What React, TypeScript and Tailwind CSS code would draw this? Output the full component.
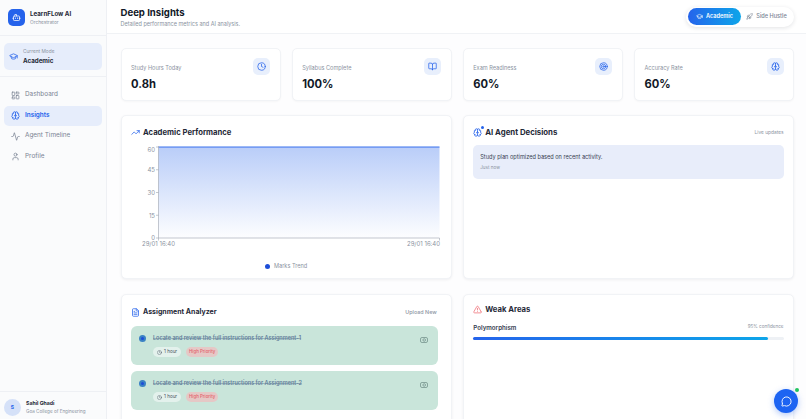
import React from 'react';
import {
  Activity, BookOpen, Bot, Brain, Clock, FileText, GraduationCap, LayoutDashboard, MessageCircle,
  Rocket, Target, TrendingUp, TriangleAlert, User,
} from 'lucide-react';

const stats = [
  { label: 'Study Hours Today', value: '0.8h', icon: Clock },
  { label: 'Syllabus Complete', value: '100%', icon: BookOpen },
  { label: 'Exam Readiness', value: '60%', icon: Target },
  { label: 'Accuracy Rate', value: '60%', icon: Brain },
];

const nav = [
  { label: 'Dashboard', icon: LayoutDashboard },
  { label: 'Insights', icon: Brain, active: true },
  { label: 'Agent Timeline', icon: Activity },
  { label: 'Profile', icon: User },
];

const assignments = ['Assignment-1', 'Assignment-2'];

const Sidebar = () => (
  <aside className="flex h-full w-[107px] shrink-0 flex-col border-r border-[#eef0f4] bg-[#fafbfc]">
    <div className="flex h-[36px] items-center gap-[5px] border-b border-[#eef0f4] pl-[8px]">
      <div className="flex h-[17px] w-[17px] items-center justify-center rounded-[5px] bg-[#2563eb]">
        <Bot size={9} className="text-white" />
      </div>
      <div className="leading-none">
        <div className="text-[6.2px] font-bold leading-[9px] text-[#1f2937]">LearnFLow AI</div>
        <div className="mt-[1px] text-[4.8px] leading-[7px] text-[#8b93a1]">Orchestrator</div>
      </div>
    </div>
    <div className="border-b border-[#eef0f4] px-[4px] pb-[6px] pt-[7px]">
      <div className="flex h-[27px] items-center gap-[5px] rounded-[5px] bg-[#e6edfb] pl-[5px]">
        <GraduationCap size={9} className="text-[#2563eb]" />
        <div>
          <div className="text-[4.8px] leading-[7px] text-[#8b93a1]">Current Mode</div>
          <div className="mt-[1px] text-[6.2px] font-bold leading-[9px] text-[#1f2937]">Academic</div>
        </div>
      </div>
    </div>
    <nav className="flex flex-col gap-[0.5px] px-[4px] pt-[8px]">
      {nav.map(item => {
        const Icon = item.icon;
        return (
          <div
            key={item.label}
            className={`flex h-[20px] items-center gap-[5px] rounded-[5px] pl-[7px] ${item.active ? 'bg-[#e6edfb] text-[#2563eb] font-semibold' : 'text-[#7b8494]'}`}
          >
            <Icon size={9} />
            <span className="text-[6.4px]">{item.label}</span>
          </div>
        );
      })}
    </nav>
    <div className="mt-auto flex h-[28px] items-start gap-[5px] border-t border-[#eef0f4] pl-[4px] pt-[7px]">
      <div className="flex h-[17px] w-[17px] items-center justify-center rounded-full bg-[#d5e1f8] text-[5px] font-bold text-[#2563eb]">S</div>
      <div className="pt-[1px]">
        <div className="text-[5.2px] font-bold leading-[7px] text-[#1f2937]">Sahil Ghadi</div>
        <div className="mt-[1px] text-[4.6px] leading-[7px] text-[#8b93a1]">Goa College of Engineering</div>
      </div>
    </div>
  </aside>
);

const Chart = () => (
  <svg viewBox="0 0 331 115" className="block h-[115px] w-[331px]">
    <defs>
      <linearGradient id="area" x1="0" y1="0" x2="0" y2="1">
        <stop offset="0%" stopColor="#2563eb" stopOpacity="0.32" />
        <stop offset="100%" stopColor="#2563eb" stopOpacity="0.01" />
      </linearGradient>
    </defs>
    <rect x="36.5" y="3" width="281" height="91" fill="url(#area)" />
    <line x1="36.5" y1="3" x2="317.5" y2="3" stroke="#2563eb" strokeWidth="0.9" />
    <path d="M36.5 2V94H317.5M34 3H36.5M34 25.75H36.5M34 48.5H36.5M34 71.25H36.5M34 94H36.5M36.5 94V96.5M317.5 94V96.5" fill="none" stroke="#9ca3af" strokeWidth="0.6" />
    <g fill="#8b93a1" fontSize="6" fontFamily="Inter, sans-serif" textAnchor="end">
      <text x="33" y="8">60</text>
      <text x="33" y="28">45</text>
      <text x="33" y="50.5">30</text>
      <text x="33" y="73.5">15</text>
      <text x="33" y="96">0</text>
    </g>
    <g fill="#8b93a1" fontSize="6" fontFamily="Inter, sans-serif" textAnchor="middle">
      <text x="36.5" y="102">29/01 16:40</text>
      <text x="301.5" y="102">29/01 16:40</text>
    </g>
  </svg>
);

const App = () => (
  <div className="flex h-[419px] w-[806px] overflow-hidden bg-white font-['Inter',sans-serif]">
    <Sidebar />
    <main className="relative min-w-0 flex-1 overflow-hidden bg-[#fdfdfe]">
      <header className="flex h-[34px] items-center justify-between border-b border-[#f0f2f5] bg-white pl-[13.5px] pr-[12px]">
        <div>
          <h1 className="text-[9.6px] font-bold leading-[13px] text-[#111827]">Deep Insights</h1>
          <p className="mt-[1px] text-[5.5px] leading-[8px] text-[#8b93a1]">Detailed performance metrics and AI analysis.</p>
        </div>
        <div className="flex h-[20px] w-[108px] items-center rounded-full bg-white p-[2px] shadow-[0_1px_4px_rgba(15,23,42,0.12)]">
          <div className="flex h-[17px] w-[53px] items-center justify-center gap-[3px] rounded-full bg-gradient-to-r from-[#2563eb] to-[#0ea5e9] text-[5.6px] font-semibold text-white">
            <GraduationCap size={7} />
            Academic
          </div>
          <div className="flex flex-1 items-center justify-center gap-[3px] text-[5.6px] font-medium text-[#7b8494]">
            <Rocket size={7} />
            Side Hustle
          </div>
        </div>
      </header>

      <div className="flex flex-col gap-[14px] pl-[13.5px] pr-[12px] pt-[14px]">
        <div className="grid grid-cols-4 gap-[11px]">
          {stats.map(stat => {
            const Icon = stat.icon;
            return (
              <div key={stat.label} className="flex h-[53px] justify-between rounded-[5px] border border-[#f1f3f6] bg-white pl-[9.5px] pr-[9.5px] pt-[9px] shadow-[0_1px_2px_rgba(15,23,42,0.03)]">
                <div>
                  <div className="pt-[6px] text-[5.6px] leading-[8px] text-[#8b93a1]">{stat.label}</div>
                  <div className="mt-[4px] text-[11.2px] font-bold leading-[16px] text-[#111827]">{stat.value}</div>
                </div>
                <div className="flex h-[17px] w-[17px] items-center justify-center rounded-[5px] bg-[#e8effc] text-[#2563eb]">
                  <Icon size={9} />
                </div>
              </div>
            );
          })}
        </div>

        <div className="mb-[1px] grid grid-cols-2 gap-[11px]">
          <section className="h-[164px] rounded-[5px] border border-[#f1f3f6] bg-white pt-[11px] shadow-[0_1px_3px_rgba(15,23,42,0.06)]">
            <div className="flex h-[11px] items-center gap-[3px] pl-[9.5px]">
              <TrendingUp size={9} className="text-[#2563eb]" />
              <h2 className="text-[7.7px] font-bold text-[#1f2937]">Academic Performance</h2>
            </div>
            <div className="pt-[6px]">
              <Chart />
            </div>
            <div className="flex items-center justify-center gap-[4px] pt-[3px] text-[5.6px] leading-[8px] text-[#8b93a1]">
              <span className="h-[5px] w-[5px] rounded-full bg-[#1d4ed8]" />
              Marks Trend
            </div>
          </section>

          <section className="h-[164px] rounded-[5px] border border-[#f1f3f6] bg-white px-[9.5px] pt-[11px] shadow-[0_1px_3px_rgba(15,23,42,0.06)]">
            <div className="flex h-[11px] items-center justify-between">
              <div className="flex items-center gap-[3px]">
                <span className="relative">
                  <Brain size={9} className="text-[#2563eb]" />
                  <span className="absolute -right-[1.5px] -top-[2px] h-[3px] w-[3px] rounded-full bg-[#2563eb]" />
                </span>
                <h2 className="text-[7.8px] font-bold text-[#1f2937]">AI Agent Decisions</h2>
              </div>
              <span className="text-[4.8px] text-[#8b93a1]">Live updates</span>
            </div>
            <div className="mt-[7px] h-[34px] rounded-[5px] bg-[#e8edfa] pl-[7px] pt-[8px]">
              <p className="text-[5.6px] leading-[8px] text-[#374151]">Study plan optimized based on recent activity.</p>
              <p className="mt-[4px] text-[4.6px] leading-[6px] text-[#8b93a1]">Just now</p>
            </div>
          </section>
        </div>

        <div className="grid grid-cols-2 gap-[11px]">
          <section className="h-[160px] rounded-[5px] border border-[#f1f3f6] bg-white pl-[9.5px] pr-[13px] pt-[12px] shadow-[0_1px_3px_rgba(15,23,42,0.06)]">
            <div className="flex h-[11px] items-center justify-between">
              <div className="flex items-center gap-[3px]">
                <FileText size={9} className="text-[#2563eb]" />
                <h2 className="text-[7px] font-bold text-[#1f2937]">Assignment Analyzer</h2>
              </div>
              <span className="pr-[1px] text-[5.4px] font-medium text-[#8b93a1]">Upload New</span>
            </div>
            <div className="mt-[8px] flex flex-col gap-[6px]">
              {assignments.map(name => (
                <div key={name} className="flex h-[39px] rounded-[6px] bg-[#c9e5da] pl-[8px] pr-[10px] pt-[8px]">
                  <div className="mt-[1px] flex h-[7px] w-[7px] shrink-0 items-center justify-center rounded-full bg-[#3b82c4]">
                    <span className="h-[3px] w-[3px] rounded-full bg-[#1d4ed8]" />
                  </div>
                  <div className="ml-[7px] flex-1">
                    <div className="text-[5.5px] font-semibold leading-[8px] text-[#64809a] line-through decoration-[#64809a]/50">
                      Locate and review the full instructions for {name}
                    </div>
                    <div className="mt-[5px] flex items-center gap-[5px]">
                      <span className="flex h-[10px] items-center gap-[2px] rounded-full bg-[#e3f1ec] px-[4px] text-[4.6px] text-[#4b5563]">
                        <Clock size={5} />
                        1 hour
                      </span>
                      <span className="flex h-[10px] items-center rounded-full bg-[#e5c8c6] px-[3px] text-[4.4px] font-medium text-[#e4606a]">High Priority</span>
                    </div>
                  </div>
                  <svg width="8" height="6" viewBox="0 0 8 6" fill="none" stroke="#6b8a84" strokeWidth="0.7" className="mt-[3px]">
                    <rect x="0.5" y="0.5" width="7" height="5" rx="1.5" />
                    <circle cx="4.2" cy="3" r="1.3" />
                  </svg>
                </div>
              ))}
            </div>
          </section>

          <section className="h-[160px] rounded-[5px] border border-[#f1f3f6] bg-white px-[9.5px] pt-[9px] shadow-[0_1px_3px_rgba(15,23,42,0.06)]">
            <div className="flex h-[11px] items-center gap-[3px]">
              <TriangleAlert size={9} className="text-[#ef6b73]" />
              <h2 className="text-[7.7px] font-bold text-[#1f2937]">Weak Areas</h2>
            </div>
            <div className="mt-[8px] flex items-center justify-between">
              <span className="text-[6.2px] font-semibold text-[#374151]">Polymorphism</span>
              <span className="text-[4.6px] text-[#8b93a1]">95% confidence</span>
            </div>
            <div className="mt-[5px] h-[3px] rounded-full bg-[#eef1f5]">
              <div className="h-full w-[95%] rounded-full bg-gradient-to-r from-[#2563eb] to-[#0ea5e9]" />
            </div>
          </section>
        </div>
      </div>

      <button className="absolute bottom-[6px] right-[8px] flex h-[24px] w-[24px] items-center justify-center rounded-full bg-[#1d64f2] text-white shadow-[0_2px_6px_rgba(37,99,235,0.35)]">
        <MessageCircle size={11} />
        <span className="absolute right-[-1px] top-[-1px] h-[4px] w-[4px] rounded-full bg-[#22c55e]" />
      </button>
    </main>
  </div>
);

export default App;
